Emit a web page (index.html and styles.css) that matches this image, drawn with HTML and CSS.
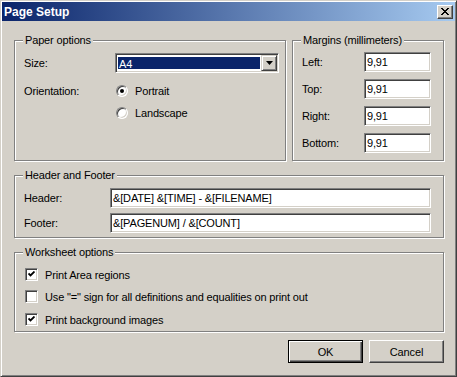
FILE: index.html
```html
<!DOCTYPE html>
<html lang="en">
<head>
    <meta charset="UTF-8">
    <title>Page Setup</title>
    <link rel="stylesheet" href="styles.css">
</head>
<body>

<div class="window">
    <div class="titlebar">
        <span class="title">Page Setup</span>
        <span class="close-btn">
            <svg width="8" height="7" viewBox="0 0 8 7" shape-rendering="crispEdges"><path d="M0 0 L7 7 M1 0 L8 7 M7 0 L0 7 M8 0 L1 7" stroke="#000" stroke-width="1.2" fill="none"/></svg>
        </span>
    </div>

    <div class="dialog">
        <div class="top-row">
            <fieldset class="group paper">
                <legend>Paper options</legend>
                <div class="row row-size">
                    <span class="label">Size:</span>
                    <div class="select">
                        <span class="select-value">A4</span>
                        <span class="select-arrow">
                            <svg width="7" height="4" viewBox="0 0 7 4"><path d="M0 0 H7 L3.5 4 Z" fill="#000"/></svg>
                        </span>
                    </div>
                </div>
                <div class="row row-radio">
                    <span class="label">Orientation:</span>
                    <span class="radio"><span class="radio-mark checked"></span>Portrait</span>
                </div>
                <div class="row row-radio second">
                    <span class="label"></span>
                    <span class="radio"><span class="radio-mark"></span>Landscape</span>
                </div>
            </fieldset>

            <fieldset class="group margins">
                <legend>Margins (millimeters)</legend>
                <div class="row">
                    <span class="label">Left:</span>
                    <input class="text-input small" type="text" value="9,91">
                </div>
                <div class="row">
                    <span class="label">Top:</span>
                    <input class="text-input small" type="text" value="9,91">
                </div>
                <div class="row">
                    <span class="label">Right:</span>
                    <input class="text-input small" type="text" value="9,91">
                </div>
                <div class="row">
                    <span class="label">Bottom:</span>
                    <input class="text-input small" type="text" value="9,91">
                </div>
            </fieldset>
        </div>

        <fieldset class="group header-footer">
            <legend>Header and Footer</legend>
            <div class="row">
                <span class="label">Header:</span>
                <input class="text-input wide" type="text" value="&amp;[DATE] &amp;[TIME] - &amp;[FILENAME]">
            </div>
            <div class="row">
                <span class="label">Footer:</span>
                <input class="text-input wide" type="text" value="&amp;[PAGENUM] / &amp;[COUNT]">
            </div>
        </fieldset>

        <fieldset class="group worksheet">
            <legend>Worksheet options</legend>
            <div class="check-row"><span class="checkbox checked"><svg width="7" height="7" viewBox="0 0 7 7"><path d="M0.5 2.5 L2.5 4.5 L6.5 0.5" stroke="#000" stroke-width="1.8" fill="none"/></svg></span>Print Area regions</div>
            <div class="check-row"><span class="checkbox"></span>Use "=" sign for all definitions and equalities on print out</div>
            <div class="check-row last"><span class="checkbox checked"><svg width="7" height="7" viewBox="0 0 7 7"><path d="M0.5 2.5 L2.5 4.5 L6.5 0.5" stroke="#000" stroke-width="1.8" fill="none"/></svg></span>Print background images</div>
        </fieldset>

        <div class="buttons">
            <button class="btn btn-default" type="button">OK</button>
            <button class="btn" type="button">Cancel</button>
        </div>
    </div>
</div>

</body>
</html>
```

FILE: styles.css
```css
* {
    box-sizing: border-box;
}
body {
    margin: 0;
    background: #d4d0c8;
    font-family: "Liberation Sans", Arial, sans-serif;
    font-size: 11px;
    letter-spacing: -0.15px;
    color: #000;
}
.window {
    width: 457px;
    height: 377px;
    padding: 1px;
    border: 1px solid;
    border-color: #d4d0c8 #404040 #404040 #d4d0c8;
    box-shadow: inset 1px 1px 0 #fff, inset -1px -1px 0 #808080;
}

/* Title bar */
.titlebar {
    height: 19px;
    display: flex;
    align-items: center;
    justify-content: space-between;
    padding: 0 2px 0 2px;
    background: linear-gradient(to right, #0a246a, #a6caf0);
}
.title {
    color: #fff;
    font-weight: bold;
    font-size: 12px;
    letter-spacing: 0;
}
.close-btn {
    width: 16px;
    height: 14px;
    display: flex;
    align-items: center;
    justify-content: center;
    background: #d4d0c8;
    border: 1px solid;
    border-color: #fff #404040 #404040 #fff;
    box-shadow: inset -1px -1px 0 #808080;
}

/* Dialog body */
.dialog {
    padding: 13px 11px 0 12px;
}
.top-row {
    display: flex;
    gap: 6px;
}
.group {
    margin: 0;
    padding: 0 9px;
    min-width: 0;
    border: 1px solid #808080;
    box-shadow: inset 1px 1px 0 #fff, 1px 1px 0 #fff;
}
.group legend {
    padding: 0 2px;
    margin-left: -1px;
    line-height: 13px;
    background: #d4d0c8;
}
.row {
    display: flex;
    align-items: center;
    height: 20px;
}
.label {
    flex: none;
}

/* Paper options */
.paper {
    width: 272px;
    padding-right: 6px;
}
.paper .label {
    width: 91px;
}
.row-size {
    margin-top: 6px;
}
.row-radio {
    height: 14px;
    margin-top: 11px;
}
.row-radio.second {
    margin-top: 8px;
}
.radio {
    display: flex;
    align-items: center;
    gap: 7px;
    margin-left: 1px;
}
.radio-mark {
    width: 12px;
    height: 12px;
    border-radius: 50%;
    border: 1px solid;
    border-color: #808080 #fff #fff #808080;
    box-shadow: inset 1px 1px 0 #404040, inset -1px -1px 0 #d4d0c8;
    background: #fff;
    display: flex;
    align-items: center;
    justify-content: center;
}
.radio-mark.checked::after {
    content: "";
    width: 4px;
    height: 4px;
    border-radius: 50%;
    background: #000;
}
.select {
    width: 164px;
    height: 20px;
    display: flex;
    padding: 2px;
    border: 1px solid;
    border-color: #808080 #fff #fff #808080;
    box-shadow: inset 1px 1px 0 #404040, inset -1px -1px 0 #d4d0c8;
    background: #fff;
}
.select-value {
    flex: 1;
    margin: 1px 1px 1px 0;
    padding-left: 1px;
    line-height: 14px;
    background: #0a246a;
    color: #fff;
}
.select-arrow {
    width: 16px;
    height: 16px;
    margin: -1px -1px -1px 0;
    display: flex;
    align-items: center;
    justify-content: center;
    background: #d4d0c8;
    border: 1px solid;
    border-color: #d4d0c8 #404040 #404040 #d4d0c8;
    box-shadow: inset 1px 1px 0 #fff, inset -1px -1px 0 #808080;
}

/* Margins */
.margins {
    width: 152px;
    padding-right: 12px;
    padding-bottom: 7px;
}
.margins .label {
    width: 62px;
}
.margins .row {
    margin-top: 7px;
}
.margins .row:first-of-type {
    margin-top: 5px;
}
.text-input {
    height: 20px;
    padding: 0 2px;
    border: 1px solid;
    border-color: #808080 #fff #fff #808080;
    box-shadow: inset 1px 1px 0 #404040, inset -1px -1px 0 #d4d0c8;
    background: #fff;
    font: inherit;
    letter-spacing: inherit;
    color: #000;
    outline: none;
}
.text-input.small {
    width: 67px;
}
.text-input.wide {
    width: 321px;
}

/* Header and Footer */
.header-footer {
    margin-top: 8px;
    padding-bottom: 4px;
}
.header-footer .label {
    width: 86px;
}
.header-footer .row {
    margin-top: 5px;
}
.header-footer .row:first-of-type {
    margin-top: 6px;
}

/* Worksheet options */
.worksheet {
    margin-top: 8px;
    padding-bottom: 5px;
}
.check-row {
    display: flex;
    align-items: center;
    gap: 7px;
    height: 13px;
    margin-top: 9px;
    margin-left: 1px;
}
.check-row.last {
    margin-top: 10px;
}
.checkbox {
    width: 13px;
    height: 13px;
    display: flex;
    align-items: center;
    justify-content: center;
    border: 1px solid;
    border-color: #808080 #fff #fff #808080;
    box-shadow: inset 1px 1px 0 #404040, inset -1px -1px 0 #d4d0c8;
    background: #fff;
}

/* Buttons */
.buttons {
    display: flex;
    justify-content: flex-end;
    gap: 6px;
    margin-top: 8px;
}
.btn {
    width: 75px;
    height: 23px;
    padding: 0;
    font: inherit;
    letter-spacing: inherit;
    color: #000;
    background: #d4d0c8;
    border: 1px solid;
    border-color: #fff #404040 #404040 #fff;
    box-shadow: inset -1px -1px 0 #808080;
}
.btn-default {
    border-color: #000;
    box-shadow: inset 1px 1px 0 #fff, inset -1px -1px 0 #404040, inset -2px -2px 0 #808080;
}
```
